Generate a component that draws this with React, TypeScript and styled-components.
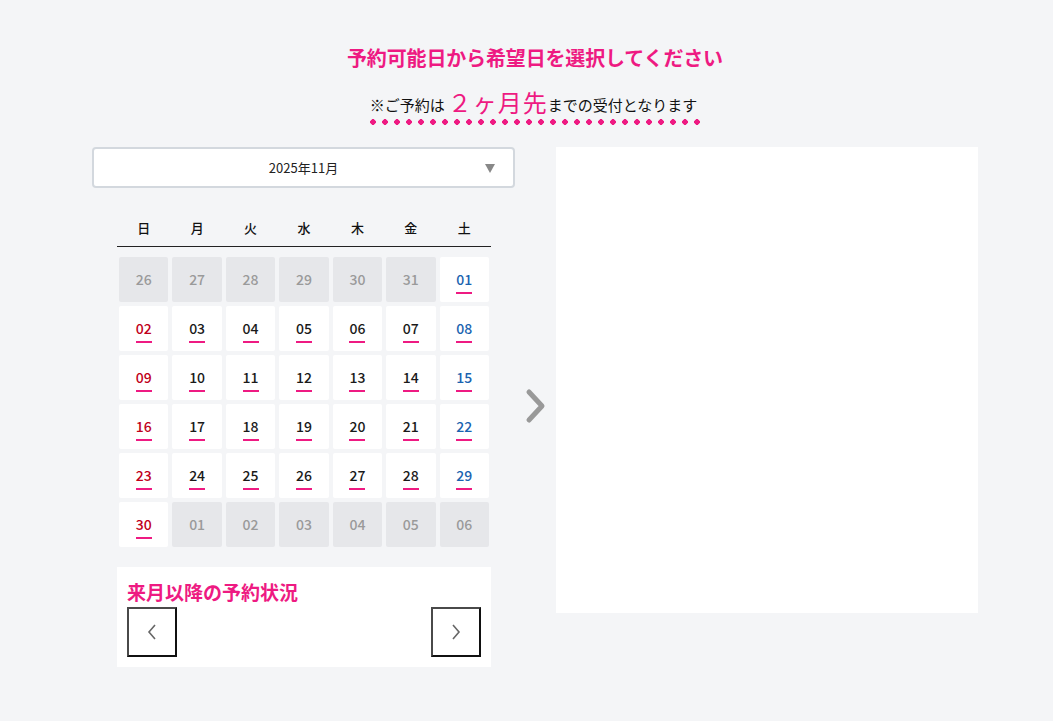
import React from "react";
import styled, { createGlobalStyle } from "styled-components";

const Global = createGlobalStyle`
  html, body { margin: 0; padding: 0; background: #f4f5f7; }
  body { font-family: "Noto Sans CJK JP", "Noto Sans", sans-serif; color: #222; }
  * { box-sizing: border-box; }
`;

const PINK = "#ee1a82";

const Page = styled.div`
  width: 886px;
  margin-left: 92px;
  padding-top: 41px;
`;

const Title = styled.h1`
  margin: 0;
  text-align: center;
  color: ${PINK};
  font-size: 20px;
  font-weight: 700;
  line-height: 34px;
  letter-spacing: -0.15px;
`;

const NoteWrap = styled.div`
  display: flex;
  justify-content: center;
  margin-top: 15px;
`;

const Note = styled.p`
  margin: 0;
  font-size: 15px;
  line-height: 24px;
  color: #111;
  padding: 0 3px 8px 0;
  background-image: radial-gradient(circle at 3px 3px, ${PINK} 2.6px, transparent 3px);
  background-size: 12px 6px;
  background-repeat: repeat-x;
  background-position: 0 bottom;
`;

const Big = styled.span`
  color: ${PINK};
  font-size: 24px;
  letter-spacing: 1px;
  margin-left: 3px;
  vertical-align: -1px;
`;

const Row = styled.div`
  display: flex;
  align-items: flex-start;
  margin-top: 22px;
`;

const LeftCol = styled.div`
  width: 423px;
  flex-shrink: 0;
`;

const Select = styled.div`
  height: 41px;
  border: 2px solid #d3d8de;
  border-radius: 4px;
  background: #fff;
  display: flex;
  align-items: center;
  justify-content: center;
  position: relative;
  font-size: 13px;
  color: #222;
`;

const Caret = styled.span`
  position: absolute;
  right: 18px;
  top: 15px;
  width: 0;
  height: 0;
  border-left: 5px solid transparent;
  border-right: 5px solid transparent;
  border-top: 9px solid #888;
`;

const Calendar = styled.div`
  margin: 20px 24px 0 25px;
`;

const WeekHead = styled.div`
  display: grid;
  grid-template-columns: repeat(7, 1fr);
  border-bottom: 1px solid #222;
  height: 39px;
  align-items: center;
`;

const WeekDay = styled.span`
  text-align: center;
  font-size: 13px;
  font-weight: 500;
  color: #111;
`;

const Grid = styled.div`
  display: grid;
  grid-template-columns: repeat(7, 1fr);
  grid-auto-rows: 45px;
  column-gap: 4px;
  row-gap: 4px;
  padding: 10px 2px 0 2px;
`;

type Tone = "sun" | "sat" | "day" | "off";

const Cell = styled.div<{ $off: boolean }>`
  background: ${(p) => (p.$off ? "#e6e7ea" : "#fff")};
  border-radius: 2px;
  display: flex;
  align-items: center;
  justify-content: center;
`;

const Num = styled.span<{ $tone: Tone }>`
  position: relative;
  font-size: 14px;
  font-weight: 500;
  line-height: 20px;
  margin-top: -2px;
  color: ${(p) =>
    p.$tone === "sun"
      ? "#c0001b"
      : p.$tone === "sat"
      ? "#1a63b0"
      : p.$tone === "off"
      ? "#9a9a9a"
      : "#1a1a1a"};
  ${(p) =>
    p.$tone !== "off" &&
    `&::after {
      content: "";
      position: absolute;
      left: 50%;
      margin-left: -8px;
      bottom: -5px;
      width: 16px;
      height: 2px;
      background: ${PINK};
    }`}
`;

const Next = styled.div`
  margin: 20px 24px 0 25px;
  background: #fff;
  padding: 10px;
`;

const NextTitle = styled.h2`
  margin: 0;
  color: ${PINK};
  font-size: 19px;
  font-weight: 700;
  line-height: 30px;
`;

const NavRow = styled.div`
  display: flex;
  justify-content: space-between;
`;

const NavBtn = styled.button`
  width: 50px;
  height: 50px;
  background: #fff;
  border: 2px solid;
  border-color: #4a4a4a #111 #111 #4a4a4a;
  display: flex;
  align-items: center;
  justify-content: center;
  padding: 0;
`;

const Arrow = styled.div`
  width: 41px;
  flex-shrink: 0;
  display: flex;
  justify-content: center;
  padding-top: 241px;
`;

const Panel = styled.div`
  width: 422px;
  height: 466px;
  background: #fff;
`;

const weekdays = ["日", "月", "火", "水", "木", "金", "土"];

type Day = { n: string; off: boolean };
const days: Day[] = [];
["26", "27", "28", "29", "30", "31"].forEach((n) => days.push({ n, off: true }));
for (let i = 1; i <= 30; i++) days.push({ n: String(i).padStart(2, "0"), off: false });
["01", "02", "03", "04", "05", "06"].forEach((n) => days.push({ n, off: true }));

function tone(d: Day, idx: number): Tone {
  if (d.off) return "off";
  const c = idx % 7;
  if (c === 0) return "sun";
  if (c === 6) return "sat";
  return "day";
}

const Chevron = ({ dir }: { dir: "l" | "r" }) => (
  <svg width="10" height="16" viewBox="0 0 10 16">
    <path
      d={dir === "l" ? "M8 1 L2 8 L8 15" : "M2 1 L8 8 L2 15"}
      fill="none"
      stroke="#666"
      strokeWidth="1.6"
    />
  </svg>
);

export default function App() {
  return (
    <>
      <Global />
      <Page>
        <Title>予約可能日から希望日を選択してください</Title>
        <NoteWrap>
          <Note>
            ※ご予約は<Big>２ヶ月先</Big>までの受付となります
          </Note>
        </NoteWrap>
        <Row>
          <LeftCol>
            <Select>
              2025年11月
              <Caret />
            </Select>
            <Calendar>
              <WeekHead>
                {weekdays.map((w) => (
                  <WeekDay key={w}>{w}</WeekDay>
                ))}
              </WeekHead>
              <Grid>
                {days.map((d, i) => (
                  <Cell key={i} $off={d.off}>
                    <Num $tone={tone(d, i)}>{d.n}</Num>
                  </Cell>
                ))}
              </Grid>
            </Calendar>
            <Next>
              <NextTitle>来月以降の予約状況</NextTitle>
              <NavRow>
                <NavBtn aria-label="前へ">
                  <Chevron dir="l" />
                </NavBtn>
                <NavBtn aria-label="次へ">
                  <Chevron dir="r" />
                </NavBtn>
              </NavRow>
            </Next>
          </LeftCol>
          <Arrow>
            <svg width="22" height="36" viewBox="0 0 22 36">
              <path
                d="M4 4 L17 18 L4 32"
                fill="none"
                stroke="#999"
                strokeWidth="5"
                strokeLinecap="round"
                strokeLinejoin="round"
              />
            </svg>
          </Arrow>
          <Panel />
        </Row>
      </Page>
    </>
  );
}
